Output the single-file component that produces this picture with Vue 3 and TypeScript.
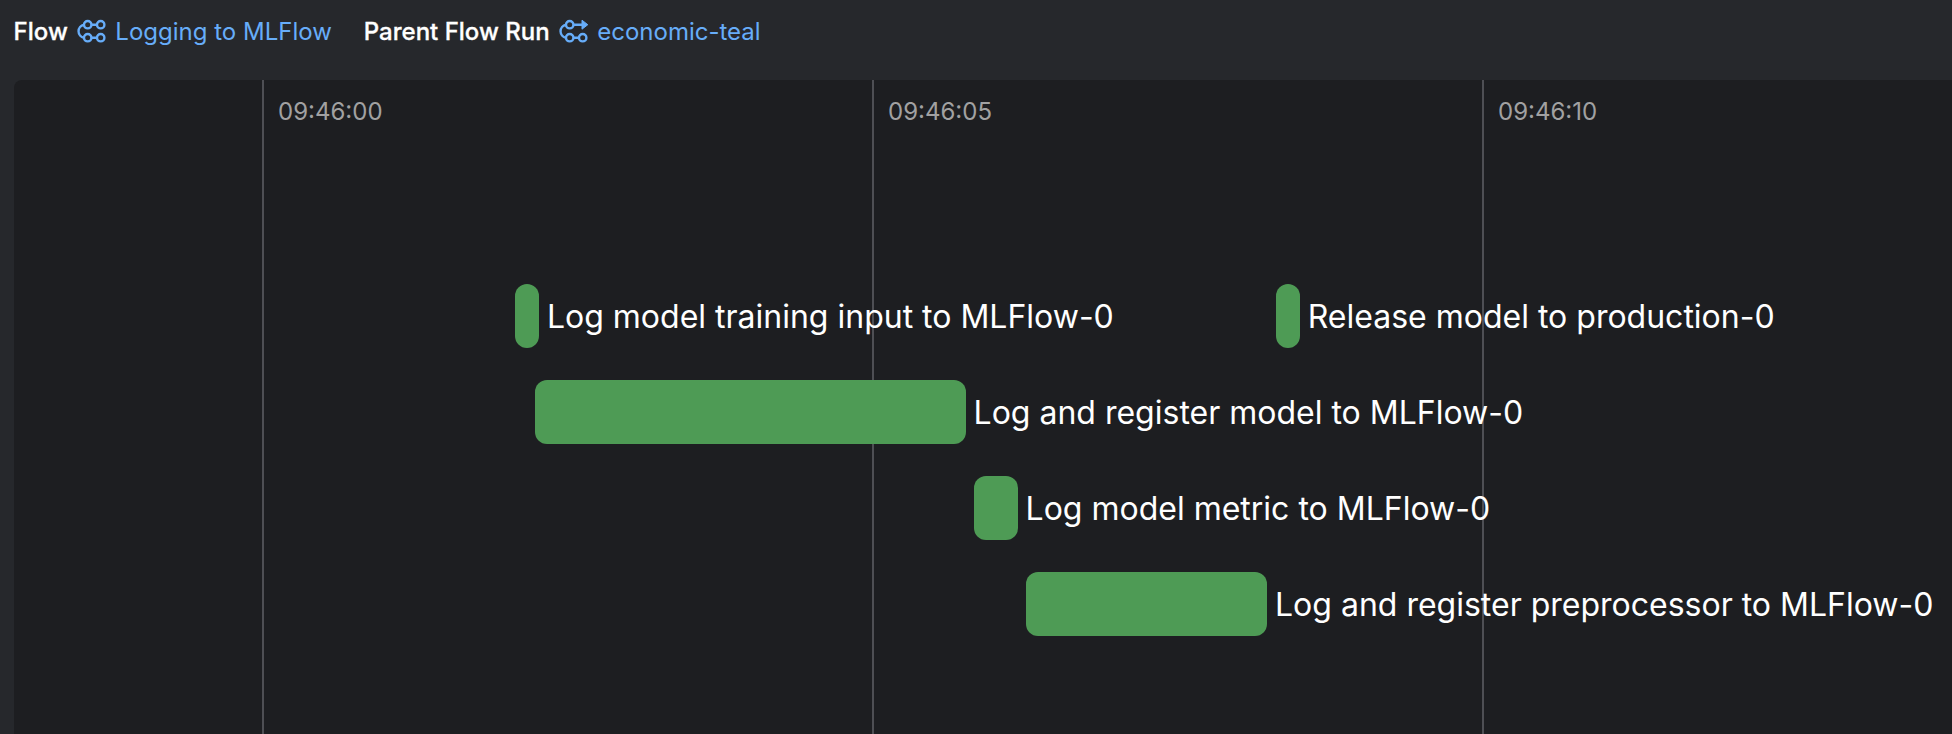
<script setup lang="ts">
interface Task {
  name: string
  start: number
  end: number
}

// Horizontal scale of the timeline, in pixels per second.
const scale = 122
const originX = 248

const ticks = [
  { label: '09:46:00', at: 0 },
  { label: '09:46:05', at: 5 },
  { label: '09:46:10', at: 10 },
]

const lanes: Task[][] = [
  [
    { name: 'Log model training input to MLFlow-0', start: 2.074, end: 2.27 },
    { name: 'Release model to production-0', start: 8.308, end: 8.506 },
  ],
  [{ name: 'Log and register model to MLFlow-0', start: 2.237, end: 5.767 }],
  [{ name: 'Log model metric to MLFlow-0', start: 5.838, end: 6.193 }],
  [{ name: 'Log and register preprocessor to MLFlow-0', start: 6.261, end: 8.238 }],
]

const offset = (t: number) => ({ marginLeft: `${originX + t * scale}px` })
const barWidth = (task: Task) => ({ width: `${(task.end - task.start) * scale}px` })
</script>

<template>
  <div class="page">
    <header class="meta">
      <div class="pair">
        <span class="key">Flow</span>
        <a class="link">
          <svg class="icon" viewBox="0 0 32 24" fill="none">
            <circle cx="12.7" cy="5.7" r="3.7" />
            <circle cx="25.7" cy="5.7" r="3.7" />
            <circle cx="12.7" cy="18.7" r="3.7" />
            <circle cx="25.7" cy="18.7" r="3.7" />
            <path d="M16.4 5.7H22M16.4 18.7H22M9 5.7A6.6 6.6 0 0 0 9 18.7" />
          </svg>
          <span>Logging to MLFlow</span>
        </a>
      </div>
      <div class="pair">
        <span class="key">Parent Flow Run</span>
        <a class="link">
          <svg class="icon" viewBox="0 0 32 24" fill="none">
            <circle cx="12.7" cy="5.7" r="3.7" />
            <circle cx="12.7" cy="18.7" r="3.7" />
            <circle cx="25.7" cy="18.7" r="3.7" />
            <path d="M16.4 5.7H25M16.4 18.7H22M9 5.7A6.6 6.6 0 0 0 9 18.7" />
            <path class="head" d="M25 1.2L30.8 5.7L25 10.2Z" />
          </svg>
          <span>economic-teal</span>
        </a>
      </div>
    </header>

    <main class="timeline">
      <div class="ticks">
        <div v-for="tick in ticks" :key="tick.label" class="tick" :style="offset(tick.at)">
          {{ tick.label }}
        </div>
      </div>
      <div class="lanes">
        <div v-for="(lane, i) in lanes" :key="i" class="lane">
          <div v-for="task in lane" :key="task.name" class="task" :style="offset(task.start)">
            <div class="bar" :style="barWidth(task)"></div>
            <span class="name">{{ task.name }}</span>
          </div>
        </div>
      </div>
    </main>
  </div>
</template>

<style>
body {
  background: #26282c;
}
</style>

<style scoped>
.page {
  display: flex;
  flex-direction: column;
  height: 734px;
  overflow: hidden;
  background: #26282c;
  font-family: Inter, sans-serif;
  white-space: nowrap;
}
.meta {
  display: flex;
  align-items: center;
  gap: 32px;
  height: 62px;
  margin-bottom: 18px;
  padding-left: 13.6px;
  font-size: 24px;
  line-height: 32px;
}
.pair {
  display: flex;
  align-items: center;
  gap: 7.7px;
}
.pair span {
  padding-top: 2px;
}
.key {
  color: #fff;
  font-weight: 500;
  -webkit-text-stroke: 0.3px #fff;
}
.link {
  display: flex;
  align-items: center;
  gap: 7.9px;
  color: #67adf9;
}
.icon {
  width: 32px;
  height: 24px;
  stroke: #67adf9;
  stroke-width: 2.4;
}
.head {
  fill: #67adf9;
  stroke-width: 1;
  stroke-linejoin: round;
}
.timeline {
  flex: 1;
  display: grid;
  margin-left: 14px;
  border-top-left-radius: 8px;
  background: #1d1e21;
  overflow: hidden;
}
.ticks,
.lanes {
  grid-area: 1 / 1;
  display: grid;
}
.tick {
  grid-area: 1 / 1;
  justify-self: start;
  padding: 16px 0 0 14px;
  border-left: 2px solid #4e4f54;
  color: #a1a1a2;
  font-size: 24px;
  line-height: 32px;
}
.lanes {
  grid-auto-rows: 64px;
  row-gap: 32px;
  padding-top: 204px;
}
.lane {
  display: grid;
}
.task {
  grid-area: 1 / 1;
  justify-self: start;
  display: flex;
  align-items: center;
  gap: 8px;
}
.bar {
  height: 64px;
  border-radius: 12px;
  background: #4e9b55;
}
.name {
  padding-top: 2px;
  color: #fff;
  font-size: 32px;
  line-height: 40px;
}
</style>
